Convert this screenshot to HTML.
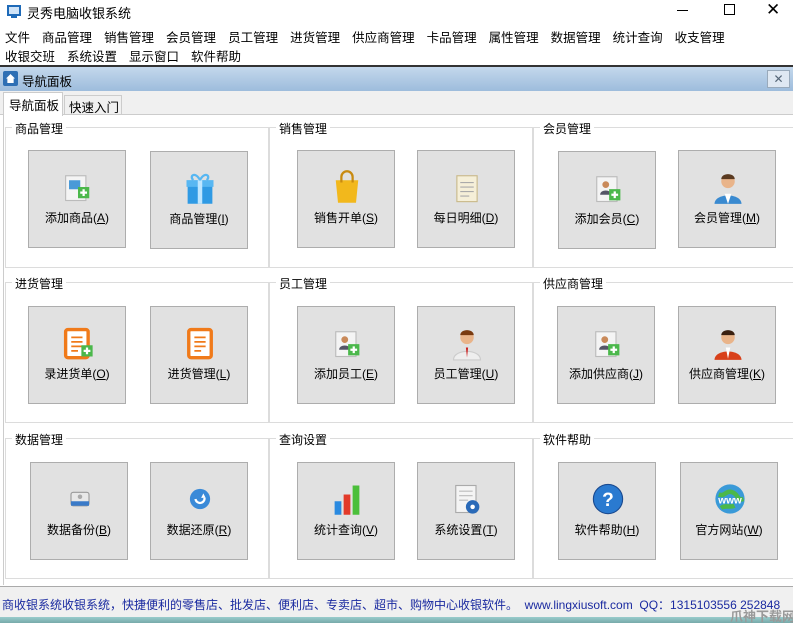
<!DOCTYPE html>
<html><head><meta charset="utf-8"><style>
*{margin:0;padding:0;box-sizing:border-box}
body{width:793px;height:623px;overflow:hidden;background:#fff;font-family:"Liberation Sans","Noto Sans CJK SC",sans-serif;font-size:12px;color:#000;position:relative}
.a{position:absolute}
.menu span{margin-right:12px}
.grp{position:absolute;border:1px solid #dcdcdc}
.gt{position:absolute;background:#fff;padding:0 3px;font-size:12px;top:-8px;left:6px}
.btn{position:absolute;width:98px;height:98px;background:#e1e1e1;border:1px solid #adadad;text-align:center;font-size:12px}
.btn .ic{position:absolute;left:31px;top:18px;width:36px;height:36px}
.btn .lb{position:absolute;left:0;right:0;top:58px;white-space:nowrap}
</style></head><body>
<div class="a" style="left:7px;top:5px;width:14px;height:11px;border:2px solid #1e6ab8;background:#cfe3f7"></div>
<div class="a" style="left:11px;top:16px;width:6px;height:2px;background:#1e6ab8"></div>
<div class="a" style="left:27px;top:3px;font-size:13px">灵秀电脑收银系统</div>
<div class="a" style="left:677px;top:10px;width:11px;height:1px;background:#000"></div>
<div class="a" style="left:724px;top:4px;width:11px;height:11px;border:1px solid #000"></div>
<div class="a" style="left:766px;top:0px;font-size:17px">✕</div>
<div class="a menu" style="left:5px;top:27px;font-size:12.5px;white-space:nowrap"><span>文件</span><span>商品管理</span><span>销售管理</span><span>会员管理</span><span>员工管理</span><span>进货管理</span><span>供应商管理</span><span>卡品管理</span><span>属性管理</span><span>数据管理</span><span>统计查询</span><span>收支管理</span></div>
<div class="a menu" style="left:5px;top:46px;font-size:12.5px;white-space:nowrap"><span>收银交班</span><span>系统设置</span><span>显示窗口</span><span>软件帮助</span></div>
<div class="a" style="left:0;top:65px;width:793px;height:2px;background:#333"></div>
<div class="a" style="left:0;top:67px;width:793px;height:24px;background:linear-gradient(#c4d8ec,#9dbcdc)"></div>
<div class="a" style="left:3px;top:71px;width:15px;height:15px;background:#2e6fb4;border-radius:2px"></div>
<div class="a" style="left:6px;top:74px;width:9px;height:9px;background:#fff;clip-path:polygon(50% 0,100% 50%,85% 50%,85% 100%,15% 100%,15% 50%,0 50%)"></div>
<div class="a" style="left:22px;top:71px;font-size:12.5px">导航面板</div>
<div class="a" style="left:767px;top:70px;width:23px;height:18px;background:#dfe8f2;border:1px solid #9ab;text-align:center;font-size:12px;color:#567;line-height:16px">✕</div>
<div class="a" style="left:0;top:91px;width:793px;height:24px;background:#f0f0f0;border-bottom:1px solid #ccc"></div>
<div class="a" style="left:3px;top:92px;width:60px;height:24px;background:#fff;border:1px solid #ccc;border-bottom:none;padding:2px 0 0 5px;font-size:12.5px">导航面板</div>
<div class="a" style="left:64px;top:95px;width:58px;height:20px;border:1px solid #ccc;border-bottom:none;padding:1px 0 0 4px;font-size:12.5px">快速入门</div>
<div class="grp" style="left:5px;top:127px;width:264px;height:141px"><div class="gt">商品管理</div></div>
<div class="grp" style="left:269px;top:127px;width:264px;height:141px"><div class="gt">销售管理</div></div>
<div class="grp" style="left:533px;top:127px;width:262px;height:141px"><div class="gt">会员管理</div></div>
<div class="grp" style="left:5px;top:282px;width:264px;height:141px"><div class="gt">进货管理</div></div>
<div class="grp" style="left:269px;top:282px;width:264px;height:141px"><div class="gt">员工管理</div></div>
<div class="grp" style="left:533px;top:282px;width:262px;height:141px"><div class="gt">供应商管理</div></div>
<div class="grp" style="left:5px;top:438px;width:264px;height:141px"><div class="gt">数据管理</div></div>
<div class="grp" style="left:269px;top:438px;width:264px;height:141px"><div class="gt">查询设置</div></div>
<div class="grp" style="left:533px;top:438px;width:262px;height:141px"><div class="gt">软件帮助</div></div>
<div class="a" style="left:3px;top:115px;width:1px;height:470px;background:#ccc"></div>
<div class="btn" style="left:28px;top:150px"><svg class="ic" viewBox="0 0 32 32"><rect x="5" y="6" width="18" height="22" fill="#f4f4f4" stroke="#bbb"/><rect x="8" y="10" width="10" height="8" fill="#4a9ad8"/><rect x="16" y="16" width="10" height="10" fill="#4bb84b"/><path d="M21 18v6M18 21h6" stroke="#fff" stroke-width="2"/></svg><div class="lb">添加商品(<u>A</u>)</div></div>
<div class="btn" style="left:150px;top:151px"><svg class="ic" viewBox="0 0 32 32"><rect x="5" y="12" width="22" height="18" fill="#2f9ae4"/><rect x="4" y="9" width="24" height="6" fill="#58b7f2"/><rect x="14" y="9" width="4" height="21" fill="#bfe6ff"/><path d="M16 9c-4-8-10-4-6 0M16 9c4-8 10-4 6 0" stroke="#58b7f2" stroke-width="2" fill="none"/></svg><div class="lb">商品管理(<u>I</u>)</div></div>
<div class="btn" style="left:297px;top:150px"><svg class="ic" viewBox="0 0 32 32"><path d="M6 10h20l-2 20H8z" fill="#f2b81c"/><path d="M11 12V7a5 5 0 0110 0v5" stroke="#c88a10" stroke-width="2" fill="none"/></svg><div class="lb">销售开单(<u>S</u>)</div></div>
<div class="btn" style="left:417px;top:150px"><svg class="ic" viewBox="0 0 32 32"><rect x="7" y="6" width="18" height="23" fill="#f5efd8" stroke="#c9b98a"/><path d="M10 12h12M10 16h12M10 20h12M10 24h8" stroke="#aaa"/></svg><div class="lb">每日明细(<u>D</u>)</div></div>
<div class="btn" style="left:558px;top:151px"><svg class="ic" viewBox="0 0 32 32"><rect x="6" y="6" width="18" height="22" fill="#f4f4f4" stroke="#bbb"/><circle cx="14" cy="13" r="3" fill="#c98a5a"/><path d="M9 22c0-5 10-5 10 0z" fill="#556"/><rect x="17" y="17" width="10" height="10" fill="#4bb84b"/><path d="M22 19v6M19 22h6" stroke="#fff" stroke-width="2"/></svg><div class="lb">添加会员(<u>C</u>)</div></div>
<div class="btn" style="left:678px;top:150px"><svg class="ic" viewBox="0 0 32 32"><circle cx="16" cy="11" r="6" fill="#e9b48a"/><path d="M10 9c0-6 12-6 12 0" fill="#5a3a20"/><path d="M4 31c0-10 24-10 24 0z" fill="#3a8ad0"/><path d="M13 22l3 9 3-9z" fill="#fff"/></svg><div class="lb">会员管理(<u>M</u>)</div></div>
<div class="btn" style="left:28px;top:306px"><svg class="ic" viewBox="0 0 32 32"><rect x="5" y="4" width="20" height="25" rx="2" fill="#fff" stroke="#f07a1a" stroke-width="3"/><path d="M10 11h10M10 15h10M10 19h10M10 23h6" stroke="#f07a1a" stroke-width="1.5"/><rect x="19" y="18" width="10" height="10" fill="#4bb84b"/><path d="M24 20v6M21 23h6" stroke="#fff" stroke-width="2"/></svg><div class="lb">录进货单(<u>O</u>)</div></div>
<div class="btn" style="left:150px;top:306px"><svg class="ic" viewBox="0 0 32 32"><rect x="6" y="4" width="20" height="25" rx="2" fill="#fff" stroke="#f07a1a" stroke-width="3"/><path d="M11 11h10M11 15h10M11 19h10M11 23h6" stroke="#f07a1a" stroke-width="1.5"/></svg><div class="lb">进货管理(<u>L</u>)</div></div>
<div class="btn" style="left:297px;top:306px"><svg class="ic" viewBox="0 0 32 32"><rect x="6" y="6" width="18" height="22" fill="#f4f4f4" stroke="#bbb"/><circle cx="14" cy="13" r="3" fill="#c98a5a"/><path d="M9 22c0-5 10-5 10 0z" fill="#556"/><rect x="17" y="17" width="10" height="10" fill="#4bb84b"/><path d="M22 19v6M19 22h6" stroke="#fff" stroke-width="2"/></svg><div class="lb">添加员工(<u>E</u>)</div></div>
<div class="btn" style="left:417px;top:306px"><svg class="ic" viewBox="0 0 32 32"><circle cx="16" cy="11" r="6" fill="#e9b48a"/><path d="M10 9c0-6 12-6 12 0" fill="#7a3a10"/><path d="M4 31c0-10 24-10 24 0z" fill="#eee" stroke="#ccc"/><path d="M15 20l1 9 1-9z" fill="#c22"/></svg><div class="lb">员工管理(<u>U</u>)</div></div>
<div class="btn" style="left:557px;top:306px"><svg class="ic" viewBox="0 0 32 32"><rect x="6" y="6" width="18" height="22" fill="#f4f4f4" stroke="#bbb"/><circle cx="14" cy="13" r="3" fill="#c98a5a"/><path d="M9 22c0-5 10-5 10 0z" fill="#556"/><rect x="17" y="17" width="10" height="10" fill="#4bb84b"/><path d="M22 19v6M19 22h6" stroke="#fff" stroke-width="2"/></svg><div class="lb">添加供应商(<u>J</u>)</div></div>
<div class="btn" style="left:678px;top:306px"><svg class="ic" viewBox="0 0 32 32"><circle cx="16" cy="11" r="6" fill="#e9b48a"/><path d="M10 9c0-6 12-6 12 0" fill="#3a2010"/><path d="M4 31c0-10 24-10 24 0z" fill="#d8401a"/><path d="M14 20l2 10 2-10z" fill="#fff"/></svg><div class="lb">供应商管理(<u>K</u>)</div></div>
<div class="btn" style="left:30px;top:462px"><svg class="ic" viewBox="0 0 32 32"><rect x="8" y="10" width="16" height="12" rx="2" fill="#e8e8e8" stroke="#999"/><rect x="8" y="18" width="16" height="4" fill="#3a7ac8"/><circle cx="16" cy="14" r="2" fill="#aaa"/></svg><div class="lb">数据备份(<u>B</u>)</div></div>
<div class="btn" style="left:150px;top:462px"><svg class="ic" viewBox="0 0 32 32"><circle cx="16" cy="16" r="9" fill="#3a8ad8"/><path d="M12 16a4 4 0 108-1" stroke="#fff" stroke-width="2" fill="none"/><path d="M19 11l2 4-4 0z" fill="#fff"/></svg><div class="lb">数据还原(<u>R</u>)</div></div>
<div class="btn" style="left:297px;top:462px"><svg class="ic" viewBox="0 0 32 32"><rect x="5" y="18" width="6" height="12" fill="#2a8ae0"/><rect x="13" y="12" width="6" height="18" fill="#e23a2a"/><rect x="21" y="4" width="6" height="26" fill="#4bbf3a"/></svg><div class="lb">统计查询(<u>V</u>)</div></div>
<div class="btn" style="left:417px;top:462px"><svg class="ic" viewBox="0 0 32 32"><rect x="6" y="4" width="18" height="24" fill="#f4f4f4" stroke="#aaa"/><path d="M9 9h12M9 13h12M9 17h8" stroke="#bbb"/><circle cx="21" cy="23" r="6" fill="#2a6ab8"/><circle cx="21" cy="23" r="2" fill="#fff"/></svg><div class="lb">系统设置(<u>T</u>)</div></div>
<div class="btn" style="left:558px;top:462px"><svg class="ic" viewBox="0 0 32 32"><circle cx="16" cy="16" r="13" fill="#2a7ad0" stroke="#1a4a90"/><text x="16" y="22" text-anchor="middle" font-size="17" font-weight="bold" fill="#fff" font-family="Liberation Sans">?</text></svg><div class="lb">软件帮助(<u>H</u>)</div></div>
<div class="btn" style="left:680px;top:462px"><svg class="ic" viewBox="0 0 32 32"><circle cx="16" cy="16" r="13" fill="#3a9ad8"/><path d="M6 12c6 2 6-4 12-2s4 8 10 6M8 24c4-3 8 0 12-2" stroke="#4bb84b" stroke-width="4" fill="none"/><text x="16" y="20" text-anchor="middle" font-size="9" font-weight="bold" fill="#fff" font-family="Liberation Sans">www</text></svg><div class="lb">官方网站(<u>W</u>)</div></div>
<div class="a" style="left:0;top:586px;width:793px;height:1px;background:#aaa"></div>
<div class="a" style="left:0;top:587px;width:793px;height:30px;background:#f0f0f0"></div>
<div class="a" style="left:2px;top:596px;font-size:12px;color:#1a2aa0;white-space:nowrap">商收银系统收银系统，快捷便利的零售店、批发店、便利店、专卖店、超市、购物中心收银软件。 &nbsp;www.lingxiusoft.com &nbsp;QQ：1315103556 252848</div>
<div class="a" style="left:0;top:617px;width:793px;height:6px;background:linear-gradient(#9cc,#7aa)"></div>
<div class="a" style="left:730px;top:606px;font-size:13px;color:#999;font-weight:bold;white-space:nowrap">爪神下载网</div>
</body></html>
